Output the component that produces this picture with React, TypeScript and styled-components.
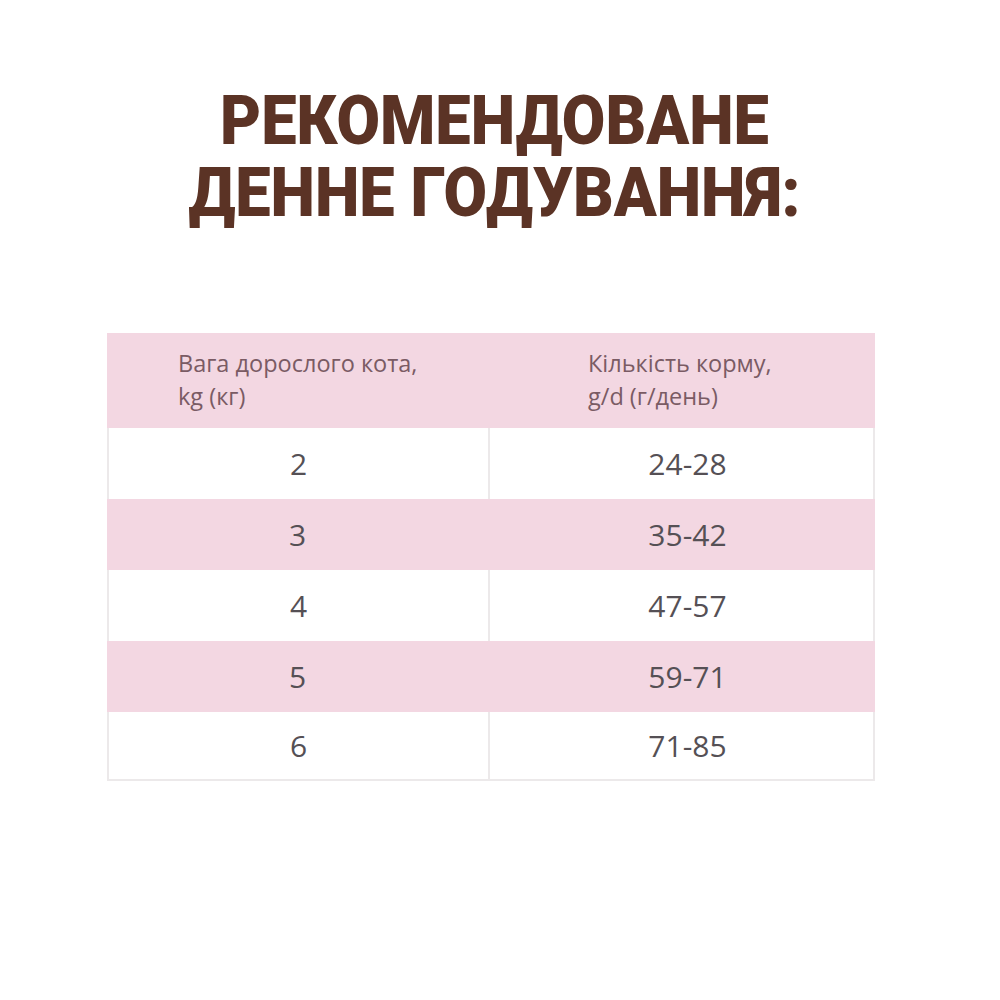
import React from 'react'
import styled, { createGlobalStyle } from 'styled-components'

const Global = createGlobalStyle`
  html, body {
    margin: 0;
    padding: 0;
    background: #ffffff;
  }
`

const Page = styled.div`
  width: 1000px;
  height: 1000px;
  box-sizing: border-box;
  padding-top: 85px;
  display: flex;
  flex-direction: column;
  align-items: center;
`

const Title = styled.h1`
  margin: 0 0 0 -12px;
  font-family: Roboto, 'Open Sans', sans-serif;
  font-weight: 900;
  font-size: 69px;
  line-height: 72px;
  letter-spacing: 0;
  color: #5b3325;
  text-align: center;
  text-transform: uppercase;
  transform: scaleX(0.915);
`

const Table = styled.div`
  margin-top: 104px;
  margin-left: -18px;
  width: 768px;
  display: grid;
  grid-template-columns: 383px 385px;
  font-family: 'Open Sans', 'Noto Sans', sans-serif;
`

const HeadCell = styled.div<{ $indent: number }>`
  background: #f3d7e2;
  height: 95px;
  box-sizing: border-box;
  padding: 14px 0 0 ${(p) => p.$indent}px;
  font-size: 23.5px;
  line-height: 33px;
  color: #7a5b64;
`

const Cell = styled.div<{ $pink: boolean; $last: boolean; $right: boolean }>`
  background: ${(p) => (p.$pink ? '#f3d7e2' : '#ffffff')};
  height: ${(p) => (p.$last ? 69 : 71)}px;
  box-sizing: border-box;
  display: flex;
  align-items: center;
  justify-content: center;
  padding-left: ${(p) => (p.$right ? 12 : 0)}px;
  font-size: 30px;
  color: #555055;
  border-left: ${(p) => (p.$pink || p.$right ? 'none' : '2px solid #ece9ea')};
  border-right: 2px solid ${(p) => (p.$pink ? '#f3d7e2' : '#ece9ea')};
  border-bottom: ${(p) => (p.$last ? '2px solid #ece9ea' : 'none')};
`

const rows: [string, string][] = [
  ['2', '24-28'],
  ['3', '35-42'],
  ['4', '47-57'],
  ['5', '59-71'],
  ['6', '71-85'],
]

const App = () => {
  return (
    <>
      <Global />
      <Page>
        <Title>
          Рекомендоване
          <br />
          денне годування:
        </Title>
        <Table>
          <HeadCell $indent={71}>
            Вага дорослого кота,
            <br />
            kg (кг)
          </HeadCell>
          <HeadCell $indent={98}>
            Кількість корму,
            <br />
            g/d (г/день)
          </HeadCell>
          {rows.map(([w, g], i) => (
            <React.Fragment key={w}>
              <Cell $pink={i % 2 === 1} $last={i === rows.length - 1} $right={false}>
                {w}
              </Cell>
              <Cell $pink={i % 2 === 1} $last={i === rows.length - 1} $right>
                {g}
              </Cell>
            </React.Fragment>
          ))}
        </Table>
      </Page>
    </>
  )
}

export default App
